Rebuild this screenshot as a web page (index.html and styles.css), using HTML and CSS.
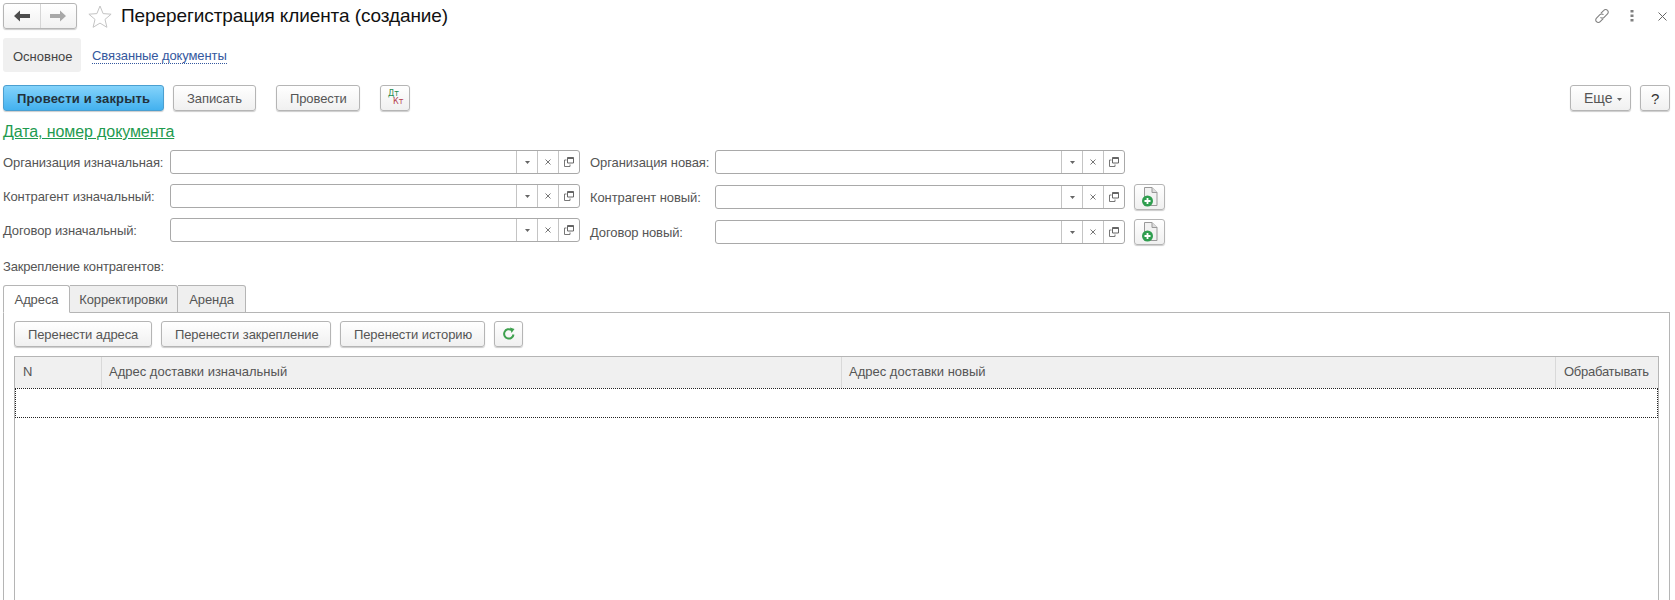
FILE: index.html
```html
<!DOCTYPE html>
<html lang="ru">
<head>
  <meta charset="UTF-8" />
  <title>Перерегистрация клиента (создание)</title>
  <link rel="stylesheet" href="styles.css">
</head>
<body>
  <svg class="sprite" width="0" height="0">
    <symbol id="caret" viewBox="0 0 5 3"><path d="M0 0h5L2.500 3z" fill="#666"/></symbol>
    <symbol id="clear" viewBox="0 0 6 6"><path d="M.5.5l5 5M5.500.5l-5 5" stroke="#777" fill="none"/></symbol>
    <symbol id="open" viewBox="0 0 10 10"><path d="M3.500.5h6v5.500h-6z" stroke="#666" fill="none"/><path d="M3.500.5h6v1.500h-6z" fill="#666"/><path d="M2.500 3H.5v6.500h5.500V7.500" stroke="#777" fill="none"/></symbol>
    <symbol id="newdoc" viewBox="0 0 18 20"><path d="M3.500.5h7.500l5 5v13h-12.500z" fill="#f2f2f2" stroke="#999"/><path d="M11 .5v5h5" fill="#ddd" stroke="#999"/><circle cx="6.500" cy="14" r="5.500" fill="#2f9e4f"/><path d="M6.500 11v6M3.500 14h6" stroke="#fff" stroke-width="1.800"/></symbol>
  </svg>

  <header class="title-bar">
    <div class="nav-group">
      <a class="nav-btn">
        <svg width="16" height="12" viewBox="0 0 16 12"><path d="M0 6l6-5.500V4h10v4H6v3.500z" fill="#4d4d4d"/></svg>
      </a>
      <a class="nav-btn">
        <svg width="16" height="12" viewBox="0 0 16 12"><path d="M16 6l-6-5.500V4H0v4h10v3.500z" fill="#a8a8a8"/></svg>
      </a>
    </div>
    <svg class="star" width="24" height="23" viewBox="0 0 24 23"><path d="M12 1l3.100 7.600 8 .6-6.100 5.200 1.900 7.900L12 18.100l-6.900 4.200L7 14.400.9 9.200l8-.6z" fill="#fff" stroke="#c4c4c4"/></svg>
    <h1>Перерегистрация клиента (создание)</h1>
    <div class="window-tools">
      <svg class="tool-link" width="16" height="16" viewBox="0 0 16 16"><g fill="none" stroke="#808080" stroke-width="1.100"><path d="M6.800 5.300l3-3a2.500 2.500 0 0 1 3.700 0 2.500 2.500 0 0 1 0 3.600l-3.400 3.400a2.500 2.500 0 0 1-3.600 0"/><path d="M9.200 10.700l-3 3a2.500 2.500 0 0 1-3.700 0 2.500 2.500 0 0 1 0-3.600l3.400-3.400a2.500 2.500 0 0 1 3.600 0"/></g></svg>
      <svg class="tool-more" width="4" height="12" viewBox="0 0 4 12"><path d="M.5 0h3v2.500h-3zM.5 4.500h3v2.500h-3zM.5 9h3v2.500h-3z" fill="#808080"/></svg>
      <svg class="tool-close" width="9" height="9" viewBox="0 0 9 9"><path d="M.5.500l8 8M8.500.500l-8 8" stroke="#666" fill="none"/></svg>
    </div>
  </header>

  <nav class="sections">
    <span class="section-tab">Основное</span>
    <a class="section-link">Связанные документы</a>
  </nav>

  <div class="toolbar">
    <button class="btn btn-primary">Провести и закрыть</button>
    <button class="btn btn-save">Записать</button>
    <button class="btn btn-post">Провести</button>
    <button class="btn btn-dtkt"><span class="dt">Дт</span><span class="kt">Кт</span></button>
    <div class="toolbar-right">
      <button class="btn btn-more">Еще <svg width="5" height="3"><use href="#caret"/></svg></button>
      <button class="btn btn-help">?</button>
    </div>
  </div>

  <a class="date-link">Дата, номер документа</a>

  <div class="form">
    <div class="form-col form-col-left">
      <div class="field">
        <label>Организация изначальная:</label>
        <div class="input">
          <span class="input-value"></span>
          <span class="input-btn"><svg width="5" height="3"><use href="#caret"/></svg></span>
          <span class="input-btn"><svg width="6" height="6"><use href="#clear"/></svg></span>
          <span class="input-btn"><svg width="10" height="10"><use href="#open"/></svg></span>
        </div>
      </div>
      <div class="field">
        <label>Контрагент изначальный:</label>
        <div class="input">
          <span class="input-value"></span>
          <span class="input-btn"><svg width="5" height="3"><use href="#caret"/></svg></span>
          <span class="input-btn"><svg width="6" height="6"><use href="#clear"/></svg></span>
          <span class="input-btn"><svg width="10" height="10"><use href="#open"/></svg></span>
        </div>
      </div>
      <div class="field">
        <label>Договор изначальный:</label>
        <div class="input">
          <span class="input-value"></span>
          <span class="input-btn"><svg width="5" height="3"><use href="#caret"/></svg></span>
          <span class="input-btn"><svg width="6" height="6"><use href="#clear"/></svg></span>
          <span class="input-btn"><svg width="10" height="10"><use href="#open"/></svg></span>
        </div>
      </div>
    </div>
    <div class="form-col form-col-right">
      <div class="field">
        <label>Организация новая:</label>
        <div class="input">
          <span class="input-value"></span>
          <span class="input-btn"><svg width="5" height="3"><use href="#caret"/></svg></span>
          <span class="input-btn"><svg width="6" height="6"><use href="#clear"/></svg></span>
          <span class="input-btn"><svg width="10" height="10"><use href="#open"/></svg></span>
        </div>
      </div>
      <div class="field">
        <label>Контрагент новый:</label>
        <div class="input">
          <span class="input-value"></span>
          <span class="input-btn"><svg width="5" height="3"><use href="#caret"/></svg></span>
          <span class="input-btn"><svg width="6" height="6"><use href="#clear"/></svg></span>
          <span class="input-btn"><svg width="10" height="10"><use href="#open"/></svg></span>
        </div>
        <button class="btn btn-add"><svg width="18" height="20"><use href="#newdoc"/></svg></button>
      </div>
      <div class="field">
        <label>Договор новый:</label>
        <div class="input">
          <span class="input-value"></span>
          <span class="input-btn"><svg width="5" height="3"><use href="#caret"/></svg></span>
          <span class="input-btn"><svg width="6" height="6"><use href="#clear"/></svg></span>
          <span class="input-btn"><svg width="10" height="10"><use href="#open"/></svg></span>
        </div>
        <button class="btn btn-add"><svg width="18" height="20"><use href="#newdoc"/></svg></button>
      </div>
    </div>
  </div>

  <p class="group-title">Закрепление контрагентов:</p>

  <div class="tabs">
    <span class="tab tab-active">Адреса</span>
    <span class="tab">Корректировки</span>
    <span class="tab">Аренда</span>
  </div>

  <section class="panel">
    <div class="panel-tools">
      <button class="btn">Перенести адреса</button>
      <button class="btn">Перенести закрепление</button>
      <button class="btn">Перенести историю</button>
      <button class="btn btn-refresh">
        <svg width="14" height="14" viewBox="0 0 14 14"><path d="M11.500 7.500A4.700 4.700 0 1 1 9.500 3" fill="none" stroke="#3fa14f" stroke-width="2"/><path d="M8 .5l4.500 1.500-3 4z" fill="#3fa14f"/></svg>
      </button>
    </div>
    <div class="grid">
      <div class="grid-head">
        <div class="col col-n">N</div>
        <div class="col col-from">Адрес доставки изначальный</div>
        <div class="col col-to">Адрес доставки новый</div>
        <div class="col col-check">Обрабатывать</div>
      </div>
      <div class="grid-row"></div>
    </div>
  </section>
</body>
</html>
```

FILE: styles.css
```css
* {
  box-sizing: border-box;
}

html, body {
  margin: 0;
  height: 600px;
  overflow: hidden;
}

body {
  display: flex;
  flex-direction: column;
  padding: 0 5px 0 3px;
  background: #fff;
  color: #555;
  font: 13px "Liberation Sans", Arial, sans-serif;
}

.sprite {
  position: absolute;
}

.title-bar {
  display: flex;
  align-items: center;
  height: 26px;
  margin-top: 3px;
  flex: none;
}

.nav-group {
  display: flex;
  width: 74px;
  height: 26px;
  border: 1px solid #b5b5b5;
  border-radius: 3px;
  background: linear-gradient(#fff, #f1f1f1);
  box-shadow: 0 1px 1px rgba(0,0,0,0.2);
}

.nav-btn {
  display: flex;
  flex: 1;
  align-items: center;
  justify-content: center;
}

.nav-btn + .nav-btn {
  border-left: 1px solid #d6d6d6;
}

.star {
  margin-left: 11px;
}

h1 {
  margin: 0 0 0 9px;
  color: #111;
  font-size: 19px;
  font-weight: normal;
  letter-spacing: -0.1px;
}

.window-tools {
  display: flex;
  align-items: center;
  margin-left: auto;
  padding-right: 3px;
}

.tool-more {
  margin-left: 20px;
}

.tool-close {
  margin-left: 24px;
}

.sections {
  display: flex;
  align-items: center;
  height: 34px;
  margin-top: 9px;
  flex: none;
}

.section-tab {
  display: flex;
  align-items: center;
  height: 100%;
  padding: 2px 10px 0;
  width: 78px;
  border-radius: 3px;
  background: #f0f0f0;
  color: #444;
}

.section-link {
  margin: 1px 0 0 11px;
  color: #34589e;
  border-bottom: 1px dotted #34589e;
  letter-spacing: -0.1px;
}

.toolbar {
  display: flex;
  align-items: center;
  margin-top: 13px;
  flex: none;
}

.btn {
  height: 26px;
  padding: 0 13px;
  border: 1px solid #b5b5b5;
  border-radius: 3px;
  background: linear-gradient(#fff, #f0f0f0);
  box-shadow: 0 1px 1px rgba(0,0,0,0.2);
  color: #555;
  font: inherit;
  letter-spacing: -0.1px;
  white-space: nowrap;
}

.btn-primary {
  width: 161px;
  border-color: #4b9fd0;
  background: linear-gradient(#84d3fb, #43b1ef);
  color: #22313c;
  font-weight: bold;
  letter-spacing: 0.15px;
}

.btn-save {
  width: 83px;
  margin-left: 9px;
}

.btn-post {
  width: 84px;
  margin-left: 20px;
}

.btn-dtkt {
  display: flex;
  flex-direction: column;
  align-items: flex-start;
  width: 30px;
  margin-left: 20px;
  padding: 4px 0 0 7px;
  font-family: "DejaVu Sans", sans-serif;
  font-size: 8px;
  letter-spacing: 0;
  line-height: 8px;
}

.dt {
  color: #1f8a4c;
}

.kt {
  margin-left: 5px;
  color: #b5404f;
}

.toolbar-right {
  display: flex;
  gap: 9px;
  margin-left: auto;
}

.btn-more {
  width: 61px;
  font-size: 14px;
  letter-spacing: 0;
}

.btn-more svg {
  margin-left: 1px;
  vertical-align: middle;
}

.btn-help {
  width: 30px;
  padding: 0;
  color: #333;
  font-size: 15px;
}

.date-link {
  margin-top: 12px;
  align-self: flex-start;
  color: #1f9b4f;
  font-size: 16px;
  letter-spacing: -0.1px;
  line-height: 18px;
  text-decoration: underline;
  flex: none;
}

.form {
  display: flex;
  margin-top: 9px;
  flex: none;
}

.form-col-left {
  width: 587px;
}

.field {
  display: flex;
  align-items: center;
  height: 24px;
  margin-bottom: 10px;
}

.field label {
  letter-spacing: -0.1px;
}

.form-col-left label {
  width: 167px;
  flex: none;
}

.form-col-right label {
  width: 125px;
  flex: none;
}

.form-col-left .input {
  width: 410px;
}

.form-col-right .input {
  width: 410px;
}

.form-col-right .field + .field {
  margin-top: 11px;
}

.input {
  display: flex;
  height: 24px;
  border: 1px solid #a9a9a9;
  border-radius: 3px;
  background: #fff;
}

.input-value {
  flex: 1;
}

.input-btn {
  display: flex;
  align-items: center;
  justify-content: center;
  width: 21px;
  border-left: 1px solid #c4c4c4;
}

.btn-add {
  display: flex;
  align-items: center;
  justify-content: center;
  width: 31px;
  margin-left: 9px;
  padding: 0;
}

.group-title {
  margin: 5px 0 0;
  line-height: 16px;
  letter-spacing: -0.18px;
  flex: none;
}

.tabs {
  display: flex;
  margin-top: 10px;
  height: 28px;
  flex: none;
  position: relative;
  z-index: 1;
}

.tab {
  display: flex;
  align-items: center;
  justify-content: center;
  width: 68px;
  border: 1px solid #b5b5b5;
  border-left-width: 0;
  border-radius: 0 3px 0 0;
  background: #efefef;
  letter-spacing: -0.1px;
}

.tab:nth-child(2) {
  width: 108px;
}

.tab-active {
  width: 67px;
  border-left-width: 1px;
  border-bottom-color: #fff;
  border-radius: 3px 3px 0 0;
  background: #fff;
}

.panel {
  display: flex;
  flex: 1;
  flex-direction: column;
  min-height: 0;
  margin-top: -1px;
  padding: 8px 10px 0;
  border: 1px solid #b5b5b5;
  border-bottom: 0;
}

.panel-tools {
  display: flex;
  gap: 9px;
  flex: none;
}

.panel-tools .btn:first-child {
  width: 138px;
}

.panel-tools .btn:nth-child(2) {
  width: 170px;
}

.panel-tools .btn:nth-child(3) {
  width: 145px;
}

.btn-refresh {
  display: flex;
  align-items: center;
  justify-content: center;
  width: 29px;
  padding: 0;
}

.grid {
  flex: 1;
  margin-top: 9px;
  border: 1px solid #b5b5b5;
  border-bottom: 0;
}

.grid-head {
  display: flex;
  height: 31px;
  background: #f0f0f0;
}

.col {
  display: flex;
  align-items: center;
  padding: 0 0 2px 7px;
  border-left: 1px solid #d9d9d9;
}

.col-n {
  width: 86px;
  padding-left: 8px;
  border-left: 0;
}

.col-from {
  width: 740px;
}

.col-to {
  width: 714px;
}

.col-check {
  flex: 1;
  padding-left: 8px;
  letter-spacing: -0.25px;
}

.grid-row {
  height: 30px;
  border: 1px dotted #222;
}
```
